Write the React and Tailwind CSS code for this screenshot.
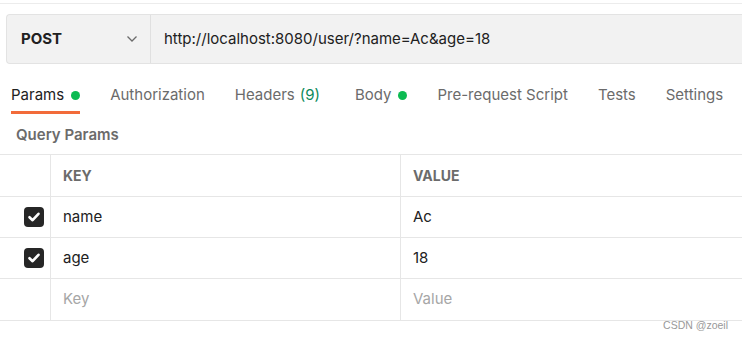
import React from "react";

const font = { fontFamily: "Inter, 'Noto Sans', sans-serif" };

function Check() {
  return (
    <div className="w-[20px] h-[20px] rounded-[4px] bg-[#262626] flex items-center justify-center">
      <svg width="14" height="14" viewBox="0 0 14 14">
        <path d="M2.5 7.2 L5.6 10.2 L11.5 3.8" fill="none" stroke="white" strokeWidth="2.6" strokeLinecap="round" strokeLinejoin="round" />
      </svg>
    </div>
  );
}

function Row({ checked, k, v, placeholder, tall }) {
  return (
    <div className={`flex ${tall ? "h-[42px]" : "h-[41px]"} border-b border-[#e6e6e6]`}>
      <div className="w-[51px] flex items-center justify-end pr-[6px] border-r border-[#e6e6e6]">
        {checked ? <Check /> : null}
      </div>
      <div className={`w-[350px] flex items-center pl-[12px] border-r border-[#e6e6e6] text-[15px] ${placeholder ? "text-[#a6a6a6]" : "text-[#212121]"}`}>
        {k}
      </div>
      <div className={`flex-1 flex items-center pl-[12px] text-[15px] ${placeholder ? "text-[#a6a6a6]" : "text-[#212121]"}`}>
        {v}
      </div>
    </div>
  );
}

export default function App() {
  const tabs = [
    { t: "Params", dot: true, active: true },
    { t: "Authorization" },
    { t: "Headers", count: "(9)" },
    { t: "Body", dot: true },
    { t: "Pre-request Script" },
    { t: "Tests" },
    { t: "Settings" },
  ];
  return (
    <div className="w-[742px] h-[341px] bg-white relative overflow-hidden" style={font}>
      <div className="h-[4px] border-b border-[#ececec]" />
      <div className="pt-[10px] pl-[6px]">
        <div className="flex h-[50px] bg-[#f2f2f2] border border-[#e3e3e3] rounded-l-[4px] border-r-0">
          <div className="w-[144px] flex items-center justify-between pl-[14px] pr-[12px] border-r border-[#e0e0e0]">
            <span className="text-[15px] font-bold text-[#212121]">POST</span>
            <svg width="12" height="8" viewBox="0 0 12 8">
              <path d="M1.5 1.5 L6 6 L10.5 1.5" fill="none" stroke="#6b6b6b" strokeWidth="1.3" />
            </svg>
          </div>
          <div className="flex items-center pl-[13px] text-[15px] text-[#212121]">
            http://localhost:8080/user/?name=Ac&amp;age=18
          </div>
        </div>
      </div>
      <div className="flex pl-[11px] mt-[17px] gap-[30px] h-[33px]">
        {tabs.map((tb) => (
          <div key={tb.t} className={`relative flex items-start text-[15px] ${tb.active ? "text-[#212121]" : "text-[#6b6b6b]"} ${tb.count ? "pr-[5px]" : ""}`}>
            <span className="leading-[20px] mt-[4px]">{tb.t}</span>
            {tb.count ? <span className="leading-[20px] mt-[4px] ml-[5px] text-[#0d8a5b]">{tb.count}</span> : null}
            {tb.dot ? <span className="w-[9px] h-[9px] rounded-full bg-[#0cbb52] ml-[7px] mt-[10px]" /> : null}
            {tb.active ? <span className="absolute left-0 right-0 bottom-0 h-[3px] bg-[#f26b3a]" /> : null}
          </div>
        ))}
      </div>
      <div className="pl-[16px] pt-[2px] h-[40px] flex items-center text-[15px] font-semibold text-[#6b6b6b]">Query Params</div>
      <div className="border-t border-[#e6e6e6]">
        <div className="flex h-[42px] border-b border-[#e6e6e6]">
          <div className="w-[51px] border-r border-[#e6e6e6]" />
          <div className="w-[350px] flex items-center pl-[12px] border-r border-[#e6e6e6] text-[14px] font-bold text-[#6b6b6b]">KEY</div>
          <div className="flex-1 flex items-center pl-[12px] text-[14px] font-bold text-[#6b6b6b]">VALUE</div>
        </div>
        <Row checked k="name" v="Ac" />
        <Row checked k="age" v="18" />
        <Row k="Key" v="Value" placeholder tall />
      </div>
      <div className="absolute right-[14px] bottom-[7px] text-[10.5px] text-[#999999]" style={{ fontFamily: "'Liberation Sans', Arial, sans-serif" }}>CSDN @zoeil</div>
    </div>
  );
}
